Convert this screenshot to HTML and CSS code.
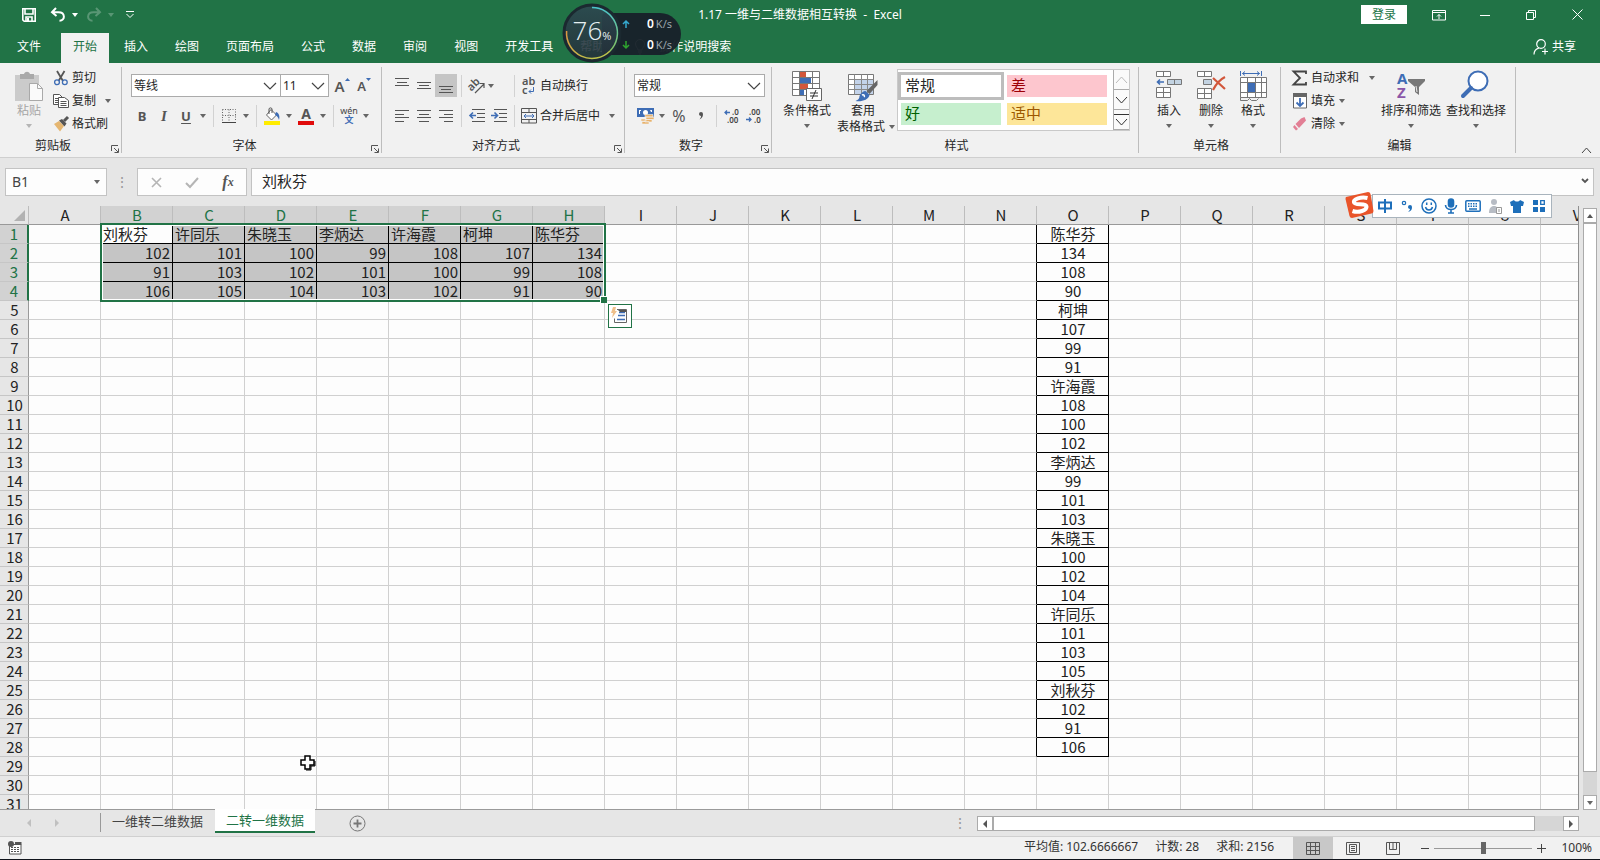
FILE: index.html
```html
<!DOCTYPE html>
<html lang="zh-CN">
<head>
<meta charset="utf-8">
<title>1.17 一维与二维数据相互转换 - Excel</title>
<link rel="stylesheet" href="styles.css">
</head>
<body>
<header class="top">
  <div class="titlebar">
    <div class="quick">
      <button class="qbtn" aria-label="保存"><svg width="16" height="16" viewBox="0 0 16 16" fill="none" stroke="#fff" stroke-width="1.6"><path d="M1.8 1.8h12.4v12.4H3.2L1.8 12.8z"/><path d="M4 2v5h8V2M5 14v-4h6v4"/><path d="M7 11v3" stroke-width="2"/></svg></button>
      <button class="qbtn" aria-label="撤消"><svg width="16" height="16" viewBox="0 0 16 16" fill="none" stroke="#fff" stroke-width="2"><path d="M6 1L2 5.2 6.500 9M2 5.200h6.500c7 0 7 8.500 1 8.500"/></svg></button>
      <button class="qcaret" aria-label="撤消列表"><i class="caret light"></i></button>
      <button class="qbtn dim" aria-label="恢复"><svg width="16" height="16" viewBox="0 0 16 16" fill="none" stroke="#fff" stroke-width="2"><path d="M10 1l4 4.200L9.500 9M14 5.200H7.500c-7 0-7 8.500-1 8.500"/></svg></button>
      <button class="qcaret dim" aria-label="恢复列表"><i class="caret light"></i></button>
      <button class="qbtn last" aria-label="自定义快速访问工具栏"><svg width="10" height="8" viewBox="0 0 10 8" fill="none" stroke="#fff"><path d="M1 .5h8M1.500 3l3.500 3.500L8.500 3"/></svg></button>
    </div>
    <h1 class="title">1.17 一维与二维数据相互转换&nbsp; -&nbsp; Excel</h1>
    <div class="window">
      <button class="login">登录</button>
      <button class="wbtn" aria-label="功能区显示选项"><svg width="14" height="12" viewBox="0 0 14 12" fill="none" stroke="#fff"><path d="M.5 1.500h13v9.500H.5zM.5 3.500h13M7 10V5.500M5 7.500l2-2 2 2"/></svg></button>
      <button class="wbtn" aria-label="最小化"><svg width="10" height="10" viewBox="0 0 10 10" stroke="#fff"><path d="M0 5.500h10"/></svg></button>
      <button class="wbtn" aria-label="还原"><svg width="10" height="10" viewBox="0 0 10 10" fill="none" stroke="#fff"><path d="M.5 2.500h7v7h-7zM2.500 2.500v-2h7v7h-2"/></svg></button>
      <button class="wbtn" aria-label="关闭"><svg width="11" height="11" viewBox="0 0 11 11" stroke="#fff"><path d="M.5.5l10 10M10.500.5l-10 10"/></svg></button>
    </div>
  </div>
  <nav class="tabs">
    <button class="tab file">文件</button>
    <button class="tab active">开始</button>
    <button class="tab">插入</button>
    <button class="tab">绘图</button>
    <button class="tab">页面布局</button>
    <button class="tab">公式</button>
    <button class="tab">数据</button>
    <button class="tab">审阅</button>
    <button class="tab">视图</button>
    <button class="tab">开发工具</button>
    <button class="tab">帮助</button>
    <button class="tab tell"><svg width="12" height="16" viewBox="0 0 12 16" fill="none" stroke="#fff"><path d="M4 11c0-2-2.500-3-2.500-6a4.500 4.500 0 0 1 9 0c0 3-2.500 4-2.500 6zM4 13h4M5 15h2"/></svg>操作说明搜索</button>
    <button class="share"><svg width="16" height="16" viewBox="0 0 16 16" fill="none" stroke="#fff" stroke-width="1.200"><circle cx="8" cy="5" r="4.300"/><path d="M1 15.500c0-3.500 2-5.500 4.800-6.300M9 12.500h6M12 9.500v6"/></svg>共享</button>
  </nav>
  <div class="monitor">
    <div class="speed">
      <span class="rate"><svg width="8" height="8" viewBox="0 0 8 8" fill="none" stroke="#35a9cf" stroke-width="1.500"><path d="M4 8V1M1 4l3-3 3 3"/></svg><b>0</b>K/s</span>
      <span class="rate"><svg width="8" height="8" viewBox="0 0 8 8" fill="none" stroke="#2fa52f" stroke-width="1.500"><path d="M4 0v7M1 4l3 3 3-3"/></svg><b>0</b>K/s</span>
    </div>
    <div class="dial">
      <svg class="ring" width="60" height="60" viewBox="0 0 60 60" fill="none">
        <defs>
          <linearGradient id="arcR" x1="0" y1="0" x2="0" y2="1"><stop offset="0" stop-color="#4bc4cc"/><stop offset="1" stop-color="#86c560"/></linearGradient>
          <linearGradient id="arcL" x1="0" y1="0" x2="1" y2="1"><stop offset="0" stop-color="#df9740"/><stop offset="1" stop-color="#b9cc4c"/></linearGradient>
          <linearGradient id="face" x1="0" y1="0" x2="0" y2="1"><stop offset="0" stop-color="#2d4750"/><stop offset="1" stop-color="#243039"/></linearGradient>
        </defs>
        <circle cx="30" cy="30" r="28" fill="url(#face)" fill-opacity=".9" stroke="#1b2930" stroke-width="3"/>
        <path d="M30 4.500A25.500 25.500 0 0 1 48 48" stroke="url(#arcR)" stroke-width="1.500"/>
        <path d="M48 48A25.500 25.500 0 0 1 4.600 28" stroke="url(#arcL)" stroke-width="1.500"/>
      </svg>
      <span class="percent">76<small>%</small></span>
    </div>
  </div>
</header>

<section class="ribbon" aria-label="功能区">
  <div class="group">
    <div class="body">
      <button class="big w42 off"><svg width="30" height="32" viewBox="0 0 30 32"><path d="M1 4h24v26H1z" fill="#cbcbcb"/><path d="M6 3h4c1-3 5-3 6 0h4v5H6z" fill="#a9a9a9"/><path d="M15.500 12.500h8l5 5v12h-13z" fill="#fafafa" stroke="#a9a9a9"/><path d="M23.500 12.500v5h5" fill="none" stroke="#a9a9a9"/></svg><span>粘贴</span><i class="caret"></i></button>
      <div class="list">
        <button class="item"><svg width="16" height="16" viewBox="0 0 16 16" fill="none"><path d="M4 1l6 10M11.500 1l-6 10" stroke="#555" stroke-width="1.800"/><circle cx="4" cy="12.300" r="2.400" stroke="#3e6db5" stroke-width="1.300"/><circle cx="11.800" cy="12.300" r="2.400" stroke="#3e6db5" stroke-width="1.300"/></svg>剪切</button>
        <button class="item"><svg width="16" height="16" viewBox="0 0 16 16" fill="#fff" stroke="#555"><path d="M.5 1.500h6l3 3v7h-9z"/><path d="M2 5.500h4M2 7.500h4M2 9.500h4"/><path d="M5.500 4.500h6l4 3v7h-10z"/><path d="M7.500 8.500h6M7.500 10.500h6M7.500 12.500h6" /></svg>复制<i class="caret end"></i></button>
        <button class="item"><svg width="16" height="16" viewBox="0 0 16 16"><path d="M1 8l5-3 5 5-4 5.500z" fill="#e5b671"/><path d="M6 4.500L9 3l4.500 4.500-2 3z" fill="#555"/><path d="M11 5l4-4" stroke="#555" stroke-width="3"/></svg>格式刷</button>
      </div>
    </div>
    <div class="foot opts"><span>剪贴板</span><button class="launch" aria-label="剪贴板选项"><svg width="8" height="8" viewBox="0 0 8 8" fill="none" stroke="#555"><path d="M.5 6V.5H7M3 3l4 4M7.500 3.500v4h-4"/></svg></button></div>
  </div>

  <div class="group">
    <div class="body stack">
      <div class="row">
        <span class="combo w150"><select aria-label="字体"><option>等线</option></select><svg width="14" height="8" viewBox="0 0 14 8" fill="none" stroke="#444" stroke-width="1.200"><path d="M1 1l6 6 6-6"/></svg></span><span class="combo w48"><select aria-label="字号"><option>11</option></select><svg width="14" height="8" viewBox="0 0 14 8" fill="none" stroke="#444" stroke-width="1.200"><path d="M1 1l6 6 6-6"/></svg></span>
        <button class="tool ml" aria-label="增大字号"><b class="big-a">A</b><svg class="tip" width="5" height="3" viewBox="0 0 5 3"><path d="M0 3l2.500-3L5 3z" fill="#3e6db5"/></svg></button>
        <button class="tool" aria-label="减小字号"><b class="small-a">A</b><svg class="tip" width="5" height="3" viewBox="0 0 5 3"><path d="M0 0l2.500 3L5 0z" fill="#3e6db5"/></svg></button>
      </div>
      <div class="row">
        <button class="tool"><b>B</b></button><button class="tool"><b class="it">I</b></button><button class="tool"><b class="un">U</b></button><button class="drop" aria-label="下划线"><i class="caret"></i></button>
        <i class="sep"></i>
        <button class="tool" aria-label="边框"><svg width="14" height="14" viewBox="0 0 14 14" stroke="#666" fill="none"><path d="M.5.5h13v12M.5.5v12M7 .5v12M.5 6.500h13" stroke-dasharray="1 1.500"/><path d="M0 13.500h14" stroke="#444"/></svg></button><button class="drop" aria-label="边框列表"><i class="caret"></i></button>
        <i class="sep"></i>
        <button class="tool" aria-label="填充颜色"><svg width="18" height="18" viewBox="0 0 18 18"><path d="M8 2.500l5.500 5.500-5 5L3.500 8z" fill="#fff" stroke="#666"/><path d="M6 7V2c0-1.500 3-1.500 3 0v4" fill="none" stroke="#555"/><path d="M13 5c3 1 4 4 3 8-1-3-2-4-4-5z" fill="#3e6db5"/><path d="M1 14h16v4H1z" fill="#ffec00"/></svg></button><button class="drop" aria-label="填充颜色列表"><i class="caret"></i></button>
        <button class="tool" aria-label="字体颜色"><b class="ink">A</b></button><button class="drop" aria-label="字体颜色列表"><i class="caret"></i></button>
        <i class="sep"></i>
        <button class="tool" aria-label="拼音"><span class="pinyin">wén<em>文</em></span></button><button class="drop" aria-label="拼音列表"><i class="caret"></i></button>
      </div>
    </div>
    <div class="foot opts"><span>字体</span><button class="launch" aria-label="字体选项"><svg width="8" height="8" viewBox="0 0 8 8" fill="none" stroke="#555"><path d="M.5 6V.5H7M3 3l4 4M7.500 3.500v4h-4"/></svg></button></div>
  </div>

  <div class="group">
    <div class="body stack">
      <div class="row">
        <button class="tool" aria-label="顶端对齐"><svg width="14" height="18" viewBox="0 0 14 18" stroke="#555"><path d="M0 1.500h14M2 5.500h10M0 8.500h14"/></svg></button><button class="tool" aria-label="垂直居中"><svg width="14" height="18" viewBox="0 0 14 18" stroke="#555"><path d="M0 5.500h14M2 8.500h10M0 11.500h14"/></svg></button><button class="tool on" aria-label="底端对齐"><svg width="14" height="18" viewBox="0 0 14 18" stroke="#555"><path d="M0 9.500h14M2 12.500h10M0 15.500h14"/></svg></button>
        <i class="sep"></i>
        <button class="tool" aria-label="方向"><svg width="18" height="18" viewBox="0 0 18 18"><text x="0" y="11" class="angle" transform="rotate(-45 6 9)">ab</text><path d="M7 16l9-9M11.500 6.500H16V11" fill="none" stroke="#555" stroke-width="1.200"/></svg></button><button class="tool" aria-label="方向列表"><i class="caret left"></i></button>
        <i class="sep"></i>
        <button class="wide"><svg width="16" height="18" viewBox="0 0 16 18"><text x="1" y="8" class="abc">ab</text><text x="1" y="17" class="abc">c</text><path d="M12.500 10v4.500H8M10 12.500l-2 2 2 2" fill="none" stroke="#3e6db5"/></svg>自动换行</button>
      </div>
      <div class="row">
        <button class="tool" aria-label="左对齐"><svg width="14" height="12" viewBox="0 0 14 12" stroke="#555"><path d="M0 .5h14M0 4.500h9M0 7.500h14M0 11.500h9"/></svg></button><button class="tool" aria-label="居中"><svg width="14" height="12" viewBox="0 0 14 12" stroke="#555"><path d="M0 .5h14M2 4.500h10M0 7.500h14M2 11.500h10"/></svg></button><button class="tool" aria-label="右对齐"><svg width="14" height="12" viewBox="0 0 14 12" stroke="#555"><path d="M0 .5h14M5 4.500h9M0 7.500h14M5 11.500h9"/></svg></button>
        <i class="sep"></i>
        <button class="tool" aria-label="减少缩进"><svg width="16" height="14" viewBox="0 0 16 14" fill="none" stroke="#555"><path d="M3 .5h13M8 4.500h8M8 8.500h8M3 12.500h13"/><path d="M7 6.500H1.500M4 3.500l-3 3 3 3" stroke="#3e6db5" stroke-width="1.600"/></svg></button><button class="tool" aria-label="增加缩进"><svg width="16" height="14" viewBox="0 0 16 14" fill="none" stroke="#555"><path d="M3 .5h13M8 4.500h8M8 8.500h8M3 12.500h13"/><path d="M0 6.500h6M3.500 3.500l3 3-3 3" stroke="#3e6db5" stroke-width="1.600"/></svg></button>
        <i class="sep"></i>
        <button class="wide"><svg width="16" height="16" viewBox="0 0 16 16" fill="none" stroke="#555"><path d="M.5.5h15v14.500H.5zM.5 4.500h15M.5 11.500h15M8 .5v4M8 11.500V15"/><path d="M3 8h10M5 6L3 8l2 2M11 6l2 2-2 2" stroke="#3e6db5"/></svg>合并后居中</button><button class="drop" aria-label="合并列表"><i class="caret"></i></button>
      </div>
    </div>
    <div class="foot opts"><span>对齐方式</span><button class="launch" aria-label="对齐选项"><svg width="8" height="8" viewBox="0 0 8 8" fill="none" stroke="#555"><path d="M.5 6V.5H7M3 3l4 4M7.500 3.500v4h-4"/></svg></button></div>
  </div>

  <div class="group">
    <div class="body stack">
      <div class="row">
        <span class="combo full"><select aria-label="数字格式"><option>常规</option></select><svg width="14" height="8" viewBox="0 0 14 8" fill="none" stroke="#444" stroke-width="1.200"><path d="M1 1l6 6 6-6"/></svg></span>
      </div>
      <div class="row">
        <button class="tool" aria-label="会计数字格式"><svg width="17" height="16" viewBox="0 0 17 16"><path d="M0 0h17v9H0z" fill="#3e6db5"/><path d="M2 2h2v1H3v3H2zM13 2h2v2h-1z" fill="#fff"/><circle cx="8.500" cy="4.500" r="2.500" fill="#fff"/><g fill="#e8b26b" stroke="#f1f1f1" stroke-width=".6"><path d="M8 6.500h8v2.500H8zM9 9h8v2.500H9zM8 11.500h7V14H8zM4 11h5v2H4zM5 13.500h7V16H5z"/></g></svg></button><button class="drop" aria-label="会计格式列表"><i class="caret"></i></button><button class="tool pct">%</button><button class="tool comma" aria-label="千位分隔"><svg width="6" height="8" viewBox="0 0 6 8"><path d="M1 2a2 2 0 1 1 4 0c0 3-1 4-3.500 5.500 1-1.500 1.500-2 1.500-3.500C2 4 1 3 1 2z" fill="#555"/></svg></button>
        <i class="sep"></i>
        <button class="tool" aria-label="增加小数位数"><svg width="16" height="16" viewBox="0 0 16 16"><path d="M6 4.500H1M3 2.500l-2 2 2 2" fill="none" stroke="#3e6db5" stroke-width="1.300"/><text x="8" y="7" class="dec">.0</text><text x="3" y="15" class="dec">.00</text></svg></button><button class="tool" aria-label="减少小数位数"><svg width="16" height="16" viewBox="0 0 16 16"><path d="M0 11.500h5M3 9.500l2 2-2 2" fill="none" stroke="#3e6db5" stroke-width="1.300"/><text x="3" y="7" class="dec">.00</text><text x="8" y="15" class="dec">.0</text></svg></button>
      </div>
    </div>
    <div class="foot opts"><span>数字</span><button class="launch" aria-label="数字选项"><svg width="8" height="8" viewBox="0 0 8 8" fill="none" stroke="#555"><path d="M.5 6V.5H7M3 3l4 4M7.500 3.500v4h-4"/></svg></button></div>
  </div>

  <div class="group">
    <div class="body">
      <button class="big w52"><svg width="30" height="32" viewBox="0 0 30 32"><path d="M.5.5h27v24H.5z" fill="#fff" stroke="#777"/><path d="M.5 6.500h27M.5 12.500h27M.5 18.500h27M7.500.5v24M20.500.5v24" stroke="#777" fill="none"/><path d="M8 1h6v5H8zM8 13h8v5H8z" fill="#d2573b"/><path d="M8 7h11v5H8zM8 19h4v5H8z" fill="#3e6db5"/><path d="M14.500 17.500h15v12h-15z" fill="#fff" stroke="#666"/><path d="M18 22h8M18 25h8M24 19l-4 9" stroke="#333"/></svg><span>条件格式</span><i class="caret"></i></button>
      <button class="big w60"><svg width="30" height="32" viewBox="0 0 30 32"><path d="M.5 3.500h25v20H.5z" fill="#fff" stroke="#777"/><path d="M7 8h18v15H7z" fill="#c3d3ea"/><path d="M.5 8.500h25M.5 13.500h25M.5 18.500h25M6.500 3.500v20M13.500 3.500v20M19.500 3.500v20" stroke="#888" fill="none"/><path d="M29.500 9v5l-8 9-3-3z" fill="#666"/><path d="M17.500 20l4 4c-1 5-8 7-14 6 3-1 4-3 4-5 1-3 4-5 6-5z" fill="#3e6db5"/><path d="M14 24c2-1 3 1 2 2" stroke="#fff" fill="none" stroke-width="1.500"/></svg><span>套用</span><span class="line2">表格格式<i class="caret"></i></span></button>
      <div class="gallery">
        <div class="swatches">
          <button class="style normal">常规</button><button class="style bad">差</button>
          <button class="style good">好</button><button class="style mid">适中</button>
        </div>
        <div class="pager">
          <button class="faint" aria-label="上一行"><svg width="13" height="8" viewBox="0 0 13 8" fill="none" stroke="#bbb"><path d="M1 7l5.500-6L12 7"/></svg></button>
          <button aria-label="下一行"><svg width="13" height="8" viewBox="0 0 13 8" fill="none" stroke="#333"><path d="M1 1l5.500 6L12 1"/></svg></button>
          <button aria-label="其他"><svg width="15" height="12" viewBox="0 0 15 12" fill="none" stroke="#333"><path d="M0 .5h15M2 5l5.500 6L13 5"/></svg></button>
        </div>
      </div>
    </div>
    <div class="foot"><span>样式</span></div>
  </div>

  <div class="group">
    <div class="body">
      <button class="big w42"><svg width="28" height="32" viewBox="0 0 28 32" fill="#fff" stroke="#777"><path d="M1.500.5h14v5h-14zM8.500.5v5M1.500 16.500h14v10h-14zM8.500 16.500v10M1.500 21.500h14"/><path d="M12.500 8.500h14v5h-14zM19.500 8.500v5" fill="#c3d3e2"/><path d="M9 11H2.500M5 8.500L2.500 11 5 13.500" fill="none" stroke="#3e6db5" stroke-width="1.600"/></svg><span>插入</span><i class="caret"></i></button>
      <button class="big w42"><svg width="30" height="32" viewBox="0 0 30 32" fill="#fff" stroke="#777"><path d="M1.500.5h14v5h-14zM8.500.5v5M1.500 17.500h14v10h-14zM8.500 17.500v10M1.500 22.500h14"/><path d="M7.500 8.500h8v5h-8z" fill="#c3d3e2"/><path d="M17 7l12 11M29 6c-6 3-9 7-12 13" fill="none" stroke="#d2573b" stroke-width="2.200"/></svg><span>删除</span><i class="caret"></i></button>
      <button class="big w42"><svg width="30" height="32" viewBox="0 0 30 32" fill="none" stroke="#777"><path d="M2.500 6.500h26v20h-26z" fill="#fff"/><path d="M2.500 11.500h26M2.500 21.500h26M9.500 6.500v20M17.500 6.500v20M23.500 6.500v20M2.500 26.500v3h7l2-2 2 2h5l2-2"/><path d="M10 12h7v9h-7z" fill="#3e6db5" stroke="none"/><path d="M2.500 0v5M23.500 0v5M4.500 2.500h17M7 .5l-2.500 2L7 4.500M19 .5l2.500 2-2.500 2" stroke="#3e6db5"/></svg><span>格式</span><i class="caret"></i></button>
    </div>
    <div class="foot"><span>单元格</span></div>
  </div>

  <div class="group">
    <div class="body">
      <div class="list sums">
        <button class="item"><svg width="16" height="16" viewBox="0 0 16 16" fill="none" stroke="#444" stroke-width="1.800"><path d="M14 4V1.500H1.500L8 8l-6.500 6.500H14V12"/></svg>自动求和<i class="caret end"></i></button>
        <button class="item"><svg width="16" height="16" viewBox="0 0 16 16"><path d="M1.500.5h13v14.500h-13z" fill="#fff" stroke="#666"/><path d="M1 0h14v4H1z" fill="#666"/><path d="M8 5v8M4.500 9.500L8 13l3.500-3.500" fill="none" stroke="#3e6db5" stroke-width="1.800"/></svg>填充<i class="caret near"></i></button>
        <button class="item"><svg width="16" height="16" viewBox="0 0 16 16"><path d="M9 2.500L12.500 1 14 4.500 7 12 3.500 8z" fill="#e27f95"/><path d="M2.500 9L6 13l-2 1.500L1 11z" fill="#e27f95"/></svg>清除<i class="caret near"></i></button>
      </div>
      <button class="big w64"><svg width="30" height="32" viewBox="0 0 30 32"><text x="1" y="13" class="az a">A</text><text x="1" y="27" class="az z">Z</text><path d="M12 8h17v2l-6 6v8l-4-3v-5l-7-6z" fill="#777"/><path d="M20 15l1 6" stroke="#eee" fill="none"/></svg><span>排序和筛选</span><i class="caret"></i></button>
      <button class="big w66"><svg width="30" height="32" viewBox="0 0 30 32" fill="none" stroke="#3e6db5"><circle cx="17" cy="10" r="9.500" fill="#fff" stroke-width="2"/><path d="M10 17l-8 8" stroke-width="4" stroke-linecap="round"/></svg><span>查找和选择</span><i class="caret"></i></button>
    </div>
    <div class="foot"><span>编辑</span></div>
  </div>
  <button class="collapse" aria-label="折叠功能区"><svg width="11" height="7" viewBox="0 0 11 7" fill="none" stroke="#444"><path d="M1 6l4.500-5L10 6"/></svg></button>
</section>

<section class="formula">
  <div class="namebox"><input aria-label="名称框" value="B1"><i class="caret"></i></div>
  <span class="dots">⋮</span>
  <div class="fx">
    <button aria-label="取消"><svg width="11" height="11" viewBox="0 0 11 11" stroke="#b5b5b5" stroke-width="1.600"><path d="M1 1l9 9M10 1l-9 9"/></svg></button>
    <button aria-label="输入"><svg width="14" height="11" viewBox="0 0 14 11" fill="none" stroke="#b5b5b5" stroke-width="2"><path d="M1 6l4 4 8-9"/></svg></button>
    <button class="fn" aria-label="插入函数">f<sub>x</sub></button>
  </div>
  <div class="entry"><input aria-label="编辑栏" value="刘秋芬"><svg width="8" height="6" viewBox="0 0 8 6" fill="none" stroke="#555" stroke-width="1.800"><path d="M1 1l3 3 3-3"/></svg></div>
</section>

<main class="work">
  <div class="sheet">
    <table class="cells" id="cells"></table>
    <div class="selection"></div>
    <button class="analysis" aria-label="快速分析"><svg width="18" height="18" viewBox="0 0 18 18" fill="none"><path d="M6 2.500h9.500V15.500H3.500v-4" stroke="#666"/><path d="M8 5.500h6M7 8.500h7M6 12.500h8" stroke="#3e6db5" stroke-width="1.600"/><path d="M5 0H2L0 6h2L1 11l5-7H4z" fill="#efc08b"/><path d="M7 3h8v2H9z" fill="#555"/></svg></button>
    <svg class="cursor" width="16" height="16" viewBox="0 0 16 16"><path d="M5 1h5v4h4v5h-4v4H5v-4H1V5h4z" fill="#fff" stroke="#000" stroke-width="1.500"/><path d="M6 15h5v-4h4V6" fill="none" stroke="#000"/></svg>
  </div>
  <div class="vscroll"><button aria-label="向上滚动"><i class="caret up"></i></button><div class="vtrack"><div class="vthumb"></div></div><button aria-label="向下滚动"><i class="caret"></i></button></div>
</main>

<footer class="bottom">
  <div class="sheetbar">
    <div class="nav"><button aria-label="上一个工作表"><svg width="4" height="8" viewBox="0 0 4 8"><path d="M4 0v8L0 4z" fill="#c0c0c0"/></svg></button><button aria-label="下一个工作表"><svg width="4" height="8" viewBox="0 0 4 8"><path d="M0 0v8l4-4z" fill="#c0c0c0"/></svg></button></div>
    <button class="stab">一维转二维数据</button><button class="stab current">二转一维数据</button>
    <button class="add" aria-label="新工作表"><svg width="17" height="17" viewBox="0 0 17 17" fill="none" stroke="#777"><circle cx="8.500" cy="8.500" r="7.500"/><path d="M4.500 8.500h8M8.500 4.500v8" stroke-width="1.800"/></svg></button>
    <span class="dots grip">⋮</span>
    <div class="hscroll"><button aria-label="向左滚动"><svg width="4" height="8" viewBox="0 0 4 8"><path d="M4 0v8L0 4z" fill="#555"/></svg></button><div class="htrack"><div class="hthumb"></div></div><button aria-label="向右滚动"><svg width="4" height="8" viewBox="0 0 4 8"><path d="M0 0v8l4-4z" fill="#555"/></svg></button></div>
  </div>
  <div class="status">
    <button class="macro" aria-label="录制宏"><svg width="14" height="14" viewBox="0 0 14 14"><path d="M1.500 3.500h11.500v9.500H1.500z" fill="#fff" stroke="#555"/><path d="M7 1h6.500v3H7z" fill="#555"/><path d="M3 6.500h9M3 8.500h9M3 10.500h9" stroke="#555" stroke-dasharray="2 1"/><circle cx="3" cy="3" r="3" fill="#555"/></svg></button>
    <div class="stats"><span>平均值: 102.6666667</span><span>计数: 28</span><span>求和: 2156</span></div>
    <div class="views">
      <button class="view sel" aria-label="普通"><svg width="14" height="13" viewBox="0 0 14 13" fill="none" stroke="#555"><path d="M.5.5h13v12H.5zM.5 4.500h13M.5 8.500h13M4.500.5v12M9.500.5v12"/></svg></button>
      <button class="view" aria-label="页面布局"><svg width="14" height="13" viewBox="0 0 14 13" fill="none" stroke="#555"><path d="M.5.5h13v12H.5zM3.500 2.500h7v8h-7zM5 4.500h4M5 6.500h4M5 8.500h4"/></svg></button>
      <button class="view" aria-label="分页预览"><svg width="14" height="13" viewBox="0 0 14 13" fill="none" stroke="#555"><path d="M.5.5h13v12H.5zM3.500.5v7h7v-7M7 .5v7"/></svg></button>
    </div>
    <div class="zoom"><button aria-label="缩小"><svg width="8" height="8" viewBox="0 0 8 8" stroke="#444"><path d="M0 4.500h8"/></svg></button><input type="range" min="0" max="100" value="50" aria-label="缩放"><button aria-label="放大"><svg width="9" height="9" viewBox="0 0 9 9" stroke="#444"><path d="M0 4.500h9M4.500 0v9"/></svg></button><span class="pc">100%</span></div>
  </div>
</footer>

<div class="ime">
  <svg class="sogou" width="30" height="28" viewBox="0 0 30 28"><path d="M1 6L23 1q2 0 2.500 2l3 17q0 2-2 2.500L7 27q-2 0-2.500-2L.5 8q0-1.500.5-2z" fill="#e9542a"/><path d="M22.500 7C16 5.500 8 8 9 11.500s12 0 12.500 4-8 6.500-14 4.500" fill="none" stroke="#fff" stroke-width="4"/></svg>
  <div class="imebar">
    <svg width="16" height="16" viewBox="0 0 16 16" fill="none" stroke="#1e6fba" stroke-width="2"><path d="M2 4.500h12v6H2zM8 1v14"/></svg>
    <svg width="16" height="16" viewBox="0 0 16 16"><circle cx="5" cy="5" r="1.700" fill="none" stroke="#1e6fba" stroke-width="1.200"/><path d="M9 9a2 2 0 0 1 4 0c0 3-1 4-4 5 1-1 2-2 2-3-1 0-2-1-2-2z" fill="#1e6fba"/></svg>
    <svg width="16" height="16" viewBox="0 0 16 16" fill="none" stroke="#1e6fba" stroke-width="1.500"><circle cx="8" cy="8" r="7"/><path d="M4.500 9c1 4 6 4 7 0M5.700 4.500v2.500M10.300 4.500v2.500"/></svg>
    <svg width="16" height="16" viewBox="0 0 16 16" fill="none" stroke="#1e6fba" stroke-width="1.600"><rect x="5.500" y="1" width="5" height="8" rx="2.500" fill="#1e6fba"/><path d="M2.500 7c0 6 11 6 11 0M8 11v4M5 15h6"/></svg>
    <svg width="16" height="16" viewBox="0 0 16 16" fill="none" stroke="#1e6fba" stroke-width="1.500"><rect x=".8" y="2.800" width="14.400" height="10.400" rx="1"/><path d="M3 5.800h10M3 8.300h10" stroke-dasharray="1.500 1"/><path d="M4 11h8"/></svg>
    <svg width="16" height="16" viewBox="0 0 16 16"><circle cx="7" cy="4" r="3" fill="#b7bcc4"/><path d="M2 15c0-5 2-7 5-7s5 2 5 7z" fill="#b7bcc4"/><path d="M9.500 9.500h5v6h-5z" fill="#fff" stroke="#999"/><path d="M12 11v3" stroke="#999"/></svg>
    <svg width="16" height="16" viewBox="0 0 16 16"><path d="M5 2c1 2 5 2 6 0l4 2-1 4h-2v7H4V8H2L1 4z" fill="#1e6fba"/></svg>
    <svg width="16" height="16" viewBox="0 0 16 16" fill="#1e6fba"><path d="M2 2h5v5H2zM2 9h5v5H2zM9 9h5v5H9z"/><path d="M9.700 2.700h3.600v3.600H9.700z" fill="none" stroke="#1e6fba" stroke-width="1.300"/></svg>
  </div>
</div>
<script src="app.js"></script>
</body>
</html>
```
FILE: styles.css
```css
* { box-sizing: border-box; }
body {
  margin: 0;
  height: 100vh;
  display: flex;
  flex-direction: column;
  overflow: hidden;
  background: #e6e6e6;
  color: #262626;
  font: 12px/16px "Noto Sans", "Noto Sans CJK SC", sans-serif;
  border-bottom: 1px solid #10141c;
}
button, input, select { font: inherit; color: inherit; }
button { border: 0; padding: 0; background: none; display: flex; align-items: center; justify-content: center; white-space: nowrap; }
svg { flex: none; display: block; overflow: visible; }
i, em { font-style: normal; }

.caret { width: 0; height: 0; flex: none; border: 3px solid transparent; border-top: 4px solid #666; border-bottom: 0; }
.caret.up { border-top: 0; border-bottom: 4px solid #555; }
.caret.light { border-top-color: #fff; }

/* title bar and tabs */
.top { background: #217346; color: #fff; position: relative; }
.titlebar { display: grid; grid-template-columns: 1fr auto 1fr; height: 33px; padding-bottom: 4px; align-items: center; }
.quick { display: flex; align-items: center; padding-left: 18px; }
.qbtn { width: 22px; height: 24px; }
.qbtn + .qbtn { margin-left: 7px; }
.qcaret { width: 12px; height: 24px; margin-right: 2px; }
.qcaret + .qbtn.last { margin-left: 0; }
.dim { opacity: .25; }
.title { margin: 0; font-size: 12px; font-weight: 400; }
.window { display: flex; justify-content: flex-end; align-items: center; }
.login { width: 46px; height: 19px; background: #fff; color: #217346; margin-right: 9px; }
.wbtn { width: 46px; height: 24px; }
.tabs { display: flex; gap: 3px; padding-left: 5px; height: 30px; }
.tab { padding: 0 12px 3px; }
.tab.file { margin-right: 5px; }
.tab.active { background: #f1f1f1; color: #217346; }
.tab.tell { gap: 13px; padding-left: 15px; }
.share { margin-left: auto; margin-right: 24px; gap: 3px; padding-bottom: 3px; }

.monitor { position: absolute; left: 562px; top: 3px; }
.dial { display: grid; place-items: center; position: relative; }
.dial > * { grid-area: 1 / 1; }
.percent { font: 300 26px/32px "Open Sans", sans-serif; color: #e6f0f2; }
.percent small { font-size: 11px; font-weight: 400; }
.speed { position: absolute; left: 40px; top: 10px; width: 79px; height: 42px; border-radius: 4px 21px 21px 4px; background: rgba(24, 33, 42, .96); padding: 0 9px 0 20px; display: flex; flex-direction: column; justify-content: space-around; font-size: 11px; color: #9aa3a9; }
.rate { display: flex; align-items: center; }
.rate b { color: #fff; margin-left: auto; font-weight: 600; font-size: 12px; margin-right: 2px; }

/* ribbon */
.ribbon { display: flex; background: #f1f1f1; border-bottom: 1px solid #cfcfcf; height: 95px; }
.group { display: flex; flex-direction: column; padding: 4px 7px 0 8px; position: relative; border-right: 1px solid transparent; }
.group::after { content: ""; position: absolute; right: 0; top: 4px; bottom: 4px; width: 1px; background: #bdbdbd; }
.body { display: flex; height: 69px; }
.stack { flex-direction: column; padding-top: 3px; }
.row { display: flex; align-items: center; height: 31px; }
.row + .row { height: 29px; }
.foot { display: flex; justify-content: center; align-items: center; height: 22px; position: relative; }
.foot.opts { padding-right: 17px; }
.launch { position: absolute; right: -5px; bottom: 2px; width: 10px; height: 12px; }
.list { display: flex; flex-direction: column; width: 65px; margin-top: -1px; }
.list.sums { width: 89px; }
.item { height: 23px; justify-content: flex-start; padding-left: 3px; gap: 3px; }
.list.sums .item { padding-left: 2px; }
.caret.end { margin-left: auto; margin-right: 4px; }
.caret.near { margin-left: 1px; }
.big { flex-direction: column; justify-content: flex-start; padding-top: 4px; }
.big > span { line-height: 16px; }
.big > .caret { margin-top: 5px; }
.big svg { height: 32px; }
.line2 { display: flex; align-items: center; gap: 4px; margin-left: 6px; }
.off { color: #a6a6a6; }
.off .caret { border-top-color: #b5b5b5; }
.w42 { width: 42px; }
.w52 { width: 52px; }
.w60 { width: 60px; margin-right: 4px; }
.w64 { width: 64px; }
.w66 { width: 66px; }
.w150 { width: 150px; }
.w48 { width: 48px; }
.full { width: 131px; }
.combo { display: grid; height: 23px; align-items: center; background: #fff; border: 1px solid #ababab; }
.combo + .combo { border-left: 0; }
.combo > * { grid-area: 1 / 1; }
.combo svg { justify-self: end; margin-right: 3px; pointer-events: none; }
.combo select { appearance: none; border: 0; background: none; padding: 0 2px; height: 21px; width: 100%; }
.tool { width: 22px; height: 23px; color: #555; font-size: 13px; }
.tool.ml { margin-left: 2px; }
.tool.on { background: #c5c5c5; }
.tool.pct { font-size: 16px; }
.drop { width: 12px; height: 23px; }
.wide + .drop { margin-left: 6px; }
.wide { height: 23px; padding-left: 2px; gap: 3px; }
.sep { width: 1px; height: 22px; margin: 0 4px; background: #d2d2d2; }
.caret.left { margin-left: -16px; }
.it { font-family: "Liberation Serif", serif; font-style: italic; font-size: 15px; }
.un { text-decoration: underline; text-underline-offset: 2px; }
.big-a { font-size: 15px; font-weight: 600; }
.small-a { font-size: 13px; font-weight: 600; }
.tip { align-self: flex-start; margin-top: 4px; }
.ink { border-bottom: 4px solid #e00b0b; width: 16px; line-height: 14px; font-size: 14px; text-align: center; }
.pinyin { display: flex; flex-direction: column; align-items: center; font-size: 9px; line-height: 8px; color: #444; }
.pinyin em { color: #3e6db5; font-weight: 700; line-height: 9px; }
.angle { font-size: 11px; font-weight: 600; fill: #555; }
.abc { font-size: 11px; font-weight: 600; fill: #555; }
.dec { font-size: 8px; font-weight: 600; fill: #444; }
.az { font-size: 15px; font-weight: 700; }
.az.a { fill: #3e6db5; }
.az.z { fill: #8b57a8; }
.gallery { display: flex; height: 62px; margin: 2px 2px 0 0; background: #fff; border: 1px solid #c9c9c9; }
.swatches { display: grid; grid-template-columns: 100px 100px; grid-auto-rows: 22px; gap: 6px; padding: 5px 3px; }
.style { justify-content: flex-start; padding: 0 0 2px 4px; font-size: 15px; }
.normal { outline: 3px solid #bdbdbd; background: #fff; }
.bad { background: #fdc6ce; color: #9c0006; }
.good { background: #c6efce; color: #006100; }
.mid { background: #fde699; color: #9c5700; }
.pager { display: grid; grid-template-rows: 20px 20px 20px; width: 16px; margin-left: 3px; }
.pager button { border-left: 1px solid #ababab; border-bottom: 1px solid #ababab; background: #fafafa; }
.collapse { margin: auto 8px 3px auto; }

/* formula bar */
.formula { display: flex; padding: 10px 6px 10px 5px; height: 48px; }
.formula input { border: 0; background: none; outline: 0; min-width: 0; flex: 1; padding: 0; line-height: 22px; }
.namebox, .fx, .entry { display: flex; align-items: center; background: #fdfdfd; border: 1px solid #c3c3c3; }
.namebox { width: 102px; padding: 0 6px; font-size: 14px; color: #444; }
.dots { width: 30px; text-align: center; align-self: center; color: #999; font-size: 14px; }
.fx { width: 110px; margin-right: 4px; justify-content: space-around; }
.fx button { width: 30px; }
.fn { font: italic 700 16px/20px "Liberation Serif", serif; color: #555; }
.fn sub { font-size: 12px; }
.entry { flex: 1; padding: 0 4px 2px 10px; font-size: 15px; }

/* worksheet */
.work { display: flex; flex: 1; min-height: 0; }
.sheet { flex: 1; position: relative; overflow: hidden; border-right: 1px solid #8f8f8f; border-bottom: 1px solid #9a9a9a; }
.cells { table-layout: fixed; width: 1px; border-collapse: separate; border-spacing: 0; background: #fdfdfd; font: 15px/18px "Noto Sans CJK SC", sans-serif; color: #222; }
.cells th, .cells td { height: 19px; padding: 0; border-right: 1px solid #d0d0d0; border-bottom: 1px solid #d0d0d0; font-weight: 400; }
.cells span { display: block; padding: 0 1px 0 2px; white-space: nowrap; }
.rowhead { width: 29px; }
.col { width: 72px; }
.cells thead th { background: #e6e6e6; border-right-color: #bdbdbd; border-bottom-color: #999; }
.cells tbody th { background: #e6e6e6; border-right-color: #999; border-bottom-color: #c6c6c6; }
.cells thead th.hot, .cells tbody th.hot { background: #d2d2d2; color: #217346; }
.cells tbody th.hot { border-right: 2px solid #217346; }
.cells .corner span { display: flex; justify-content: flex-end; padding: 4px 3px 3px; }
.cells .num { text-align: right; }
.cells .num span { padding-right: 2px; }
.cells .boxed { border-color: #000; }
.cells .picked { background: #c5c5c5; }
.cells .mid-text { text-align: center; }
.cells .edge { border-right-color: #000; }
.selection { position: absolute; left: 100px; top: 17px; width: 506px; height: 79px; border: 2px solid #217346; box-shadow: inset 0 0 0 1px #fff; }
.selection::after { content: ""; position: absolute; right: -3px; bottom: -3px; width: 6px; height: 6px; background: #217346; border: solid #fff; border-width: 1px 0 0 1px; }
.analysis { position: absolute; left: 608px; top: 98px; width: 24px; height: 24px; border: 1px solid #217346; background: #fff; }
.cursor { position: absolute; left: 300px; top: 549px; }
.vscroll { width: 21px; display: flex; flex-direction: column; padding: 2px 3px 0 4px; }
.vscroll button { height: 15px; background: #fff; border: 1px solid #ababab; }
.vtrack { flex: 1; background: #d6d6d6; }
.vthumb { height: 96%; background: #fff; border: 1px solid #ababab; }

/* sheet tabs and status */
.sheetbar { display: flex; height: 27px; border-bottom: 1px solid #d0d0d0; }
.nav { display: flex; width: 101px; padding-left: 15px; border-right: 1px solid #999; margin: 3px 0 4px; }
.nav button { width: 28px; }
.stab { padding: 0 12px 4px 11px; font-size: 13px; color: #444; }
.stab.current { background: #fff; color: #217346; border-bottom: 2px solid #217346; margin-bottom: 3px; padding: 0 11px; margin-top: -1px; position: relative; }
.add { margin-left: 34px; }
.grip { margin-left: auto; width: 34px; }
.hscroll { display: flex; flex: 0 1 602px; margin: 6px 21px 5px 0; }
.hscroll button { width: 16px; background: #fff; border: 1px solid #ababab; }
.htrack { flex: 1; background: #d6d6d6; }
.hthumb { width: 95%; height: 100%; background: #fff; border: 1px solid #ababab; }
.status { display: flex; align-items: center; height: 22px; background: #f1f1f1; padding: 0 8px; color: #333; }
.stats { display: flex; gap: 17px; margin: 0 19px 2px auto; }
.views { display: flex; align-self: stretch; }
.view { width: 40px; }
.view.sel { background: #c8c8c8; }
.zoom { display: flex; align-items: center; margin-left: 8px; }
.zoom input { appearance: none; width: 98px; height: 12px; margin: 0 5px; background: linear-gradient(#999, #999) center / 100% 1px no-repeat; }
.zoom input::-webkit-slider-thumb { appearance: none; width: 5px; height: 12px; background: #666; }
.pc { margin-left: 12px; width: 34px; text-align: right; }

/* input method bar */
.ime { position: absolute; right: 48px; top: 191px; display: flex; align-items: center; }
.sogou { margin-right: -3px; z-index: 1; }
.imebar { display: flex; gap: 6px; height: 24px; align-items: center; padding: 0 4px; background: #fff; border: 1px solid #a9b4bd; margin-top: 2px; }
```
FILE: app.js
```js
const COLUMNS = 'ABCDEFGHIJKLMNOPQRSTUV'.split('');
const ROWS = 31;
const wide = [
  ['刘秋芬', '许同乐', '朱晓玉', '李炳达', '许海霞', '柯坤', '陈华芬'],
  [102, 101, 100, 99, 108, 107, 134],
  [91, 103, 102, 101, 100, 99, 108],
  [106, 105, 104, 103, 102, 91, 90]
];
// One column listing: people from last to first, each followed by their scores.
const long = [];
for (let c = wide[0].length - 1; c >= 0; c--) wide.forEach(row => long.push(row[c]));

const FIRST = 1, TARGET = COLUMNS.indexOf('O');
const cell = (tag, text, cls) => `<${tag} class="${cls}"><span>${text}</span></${tag}>`;

let html = '<colgroup><col class="rowhead">' + COLUMNS.map(() => '<col class="col">').join('') + '</colgroup>';
html += '<thead><tr><th class="corner"><span><svg width="11" height="11" viewBox="0 0 11 11"><path d="M11 0v11H0z" fill="#b2b2b2"/></svg></span></th>';
html += COLUMNS.map((name, c) => cell('th', name, c >= FIRST && c < FIRST + 7 ? 'hot' : '')).join('') + '</tr></thead><tbody>';
for (let r = 0; r < ROWS; r++) {
  html += '<tr>' + cell('th', r + 1, r < 4 ? 'hot' : '');
  html += COLUMNS.map((_, c) => {
    if (r < wide.length && c >= FIRST && c < FIRST + 7) {
      const active = r === 0 && c === FIRST;
      return cell('td', wide[r][c - FIRST], 'boxed' + (active ? '' : ' picked') + (r ? ' num' : ''));
    }
    if (c === TARGET && r < long.length) return cell('td', long[r], 'boxed mid-text');
    return cell('td', '', c === TARGET - 1 && r < long.length ? 'edge' : '');
  }).join('') + '</tr>';
}
document.getElementById('cells').innerHTML = html + '</tbody>';
```
